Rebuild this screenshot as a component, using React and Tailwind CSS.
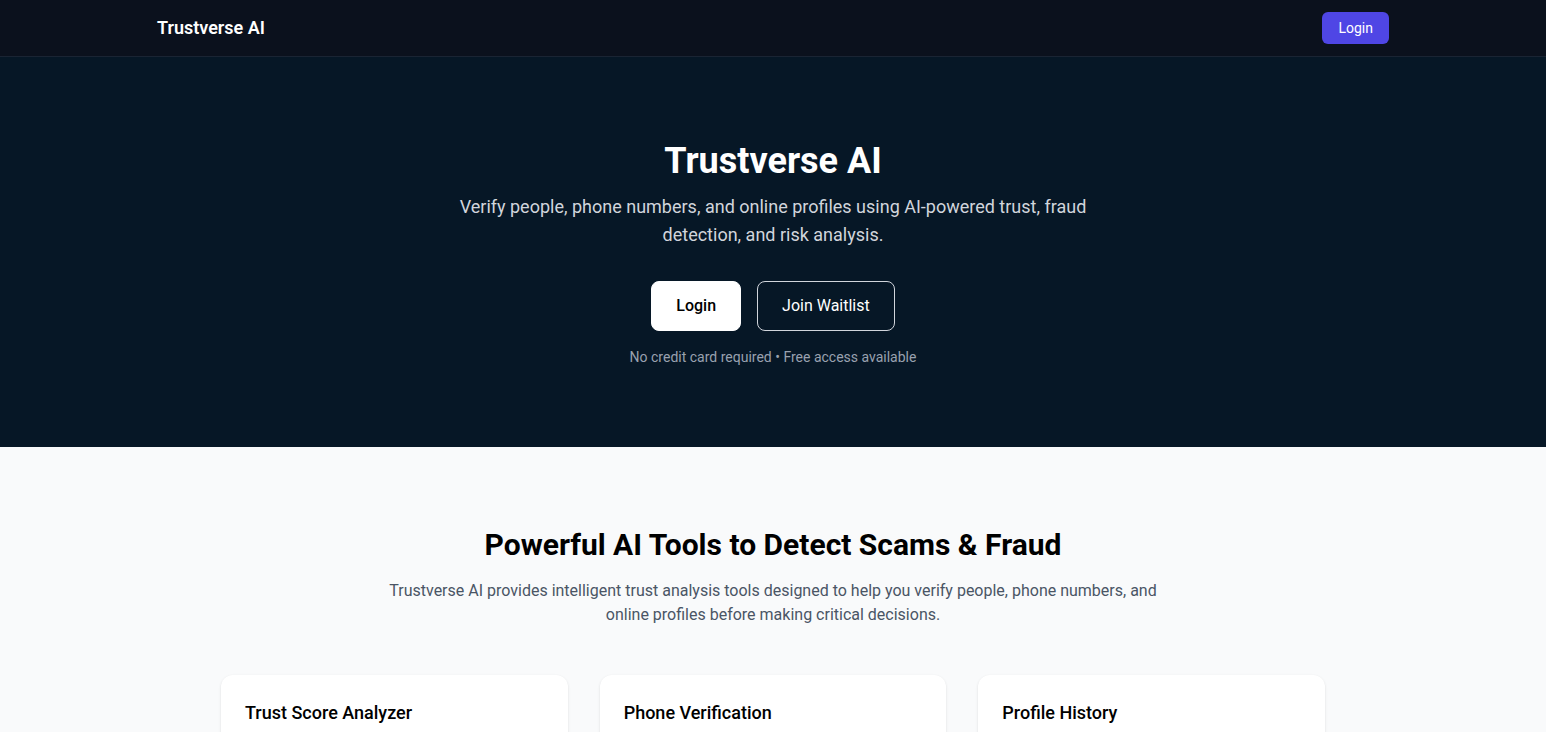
import React from 'react';

const tools = [
  {
    title: 'Trust Score Analyzer',
    text: 'Get an instant trust score for any person or profile based on behavioural signals, public records and fraud patterns.',
  },
  {
    title: 'Phone Verification',
    text: 'Check whether a phone number is linked to spam, scams or suspicious activity before you pick up or pay.',
  },
  {
    title: 'Profile History',
    text: 'Review the history of online profiles to spot fake accounts, sudden changes and risky behaviour over time.',
  },
];

const Navbar = () => (
  <header className="bg-[#0b111d] border-b border-[#1a2433]">
    <div className="max-w-7xl mx-auto px-6 h-14 flex items-center justify-between">
      <span className="text-white text-lg font-semibold">Trustverse AI</span>
      <button className="bg-[#4f46e5] text-white text-sm px-4 py-1.5 rounded-md">Login</button>
    </div>
  </header>
);

const Hero = () => (
  <section className="bg-[#061726] py-20 text-center">
    <div className="max-w-4xl mx-auto px-6">
      <h1 className="text-white text-4xl font-bold pt-1">Trustverse AI</h1>
      <p className="mt-3 max-w-2xl mx-auto text-gray-300 text-lg leading-7">
        Verify people, phone numbers, and online profiles using AI-powered trust, fraud detection, and risk analysis.
      </p>
      <div className="mt-8 flex justify-center gap-4">
        <button className="bg-white text-black font-medium px-6 py-3 rounded-lg border border-white">Login</button>
        <button className="text-white font-normal px-6 py-3 rounded-lg border border-gray-300">Join Waitlist</button>
      </div>
      <p className="mt-4 text-sm text-gray-400">No credit card required • Free access available</p>
    </div>
  </section>
);

const Features = () => (
  <section className="bg-gray-50 py-20">
    <div className="max-w-6xl mx-auto px-6">
      <div className="text-center">
        <h2 className="text-3xl font-bold text-black">Powerful AI Tools to Detect Scams &amp; Fraud</h2>
        <p className="mt-4 max-w-3xl mx-auto text-gray-600">
          Trustverse AI provides intelligent trust analysis tools designed to help you verify people, phone numbers, and online profiles before making critical decisions.
        </p>
      </div>
      <div className="mt-12 grid grid-cols-3 gap-8">
        {tools.map((tool) => (
          <div key={tool.title} className="bg-white rounded-xl shadow-sm p-6">
            <h3 className="text-lg font-medium text-black">{tool.title}</h3>
            <p className="mt-2 text-sm text-gray-600 leading-6">{tool.text}</p>
          </div>
        ))}
      </div>
    </div>
  </section>
);

export default function App() {
  return (
    <div className="min-h-screen bg-gray-50 font-['Roboto',sans-serif]">
      <Navbar />
      <Hero />
      <Features />
    </div>
  );
}
